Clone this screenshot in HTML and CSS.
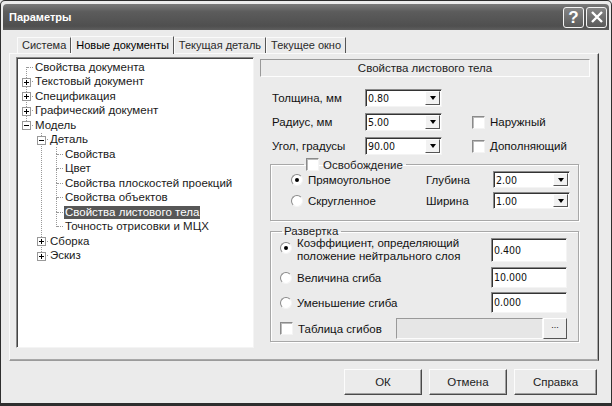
FILE: index.html
```html
<!DOCTYPE html>
<html lang="ru">
  <head>
    <meta charset="UTF-8" />
    <title>Параметры</title>
    <link rel="stylesheet" href="styles.css">
  </head>
  <body>
    <div class="window">
      <div class="titlebar">
        <span class="title">Параметры</span>
        <span class="capbtn">?</span>
        <span class="capbtn">
          <svg width="14" height="14" viewBox="0 0 14 14"><path d="M2 2 L12 12 M12 2 L2 12" stroke="#fff" stroke-width="2.4" /></svg>
        </span>
      </div>

      <div class="tabs">
        <span class="tab">Система</span>
        <span class="tab active">Новые документы</span>
        <span class="tab">Текущая деталь</span>
        <span class="tab">Текущее окно</span>
      </div>

      <div class="panel">
        <div class="treebox">
          <ul class="tree">
            <li><div class="row"><span class="twig"></span><span class="txt">Свойства документа</span></div></li>
            <li><div class="row"><span class="twig"><span class="tog plus"></span></span><span class="txt">Текстовый документ</span></div></li>
            <li><div class="row"><span class="twig"><span class="tog plus"></span></span><span class="txt">Спецификация</span></div></li>
            <li><div class="row"><span class="twig"><span class="tog plus"></span></span><span class="txt">Графический документ</span></div></li>
            <li>
              <div class="row"><span class="twig"><span class="tog"></span></span><span class="txt">Модель</span></div>
              <ul>
                <li>
                  <div class="row"><span class="twig"><span class="tog"></span></span><span class="txt">Деталь</span></div>
                  <ul>
                    <li><div class="row"><span class="twig"></span><span class="txt">Свойства</span></div></li>
                    <li><div class="row"><span class="twig"></span><span class="txt">Цвет</span></div></li>
                    <li><div class="row"><span class="twig"></span><span class="txt">Свойства плоскостей проекций</span></div></li>
                    <li><div class="row"><span class="twig"></span><span class="txt">Свойства объектов</span></div></li>
                    <li><div class="row"><span class="twig"></span><span class="txt selected">Свойства листового тела</span></div></li>
                    <li><div class="row"><span class="twig"></span><span class="txt">Точность отрисовки и МЦХ</span></div></li>
                  </ul>
                </li>
                <li><div class="row"><span class="twig"><span class="tog plus"></span></span><span class="txt">Сборка</span></div></li>
                <li><div class="row"><span class="twig"><span class="tog plus"></span></span><span class="txt">Эскиз</span></div></li>
              </ul>
            </li>
          </ul>
        </div>

        <div class="props">
          <div class="header">Свойства листового тела</div>

          <div class="params">
            <span>Толщина, мм</span>
            <span class="combo"><span class="val">0.80</span><span class="drop"></span></span>
            <span></span>

            <span>Радиус, мм</span>
            <span class="combo"><span class="val">5.00</span><span class="drop"></span></span>
            <span class="opt"><span class="check"></span>Наружный</span>

            <span>Угол, градусы</span>
            <span class="combo"><span class="val">90.00</span><span class="drop"></span></span>
            <span class="opt"><span class="check"></span>Дополняющий</span>
          </div>

          <fieldset class="group relief">
            <legend><span class="check"></span>Освобождение</legend>
            <span class="opt"><span class="radio on"></span>Прямоугольное</span>
            <span>Глубина</span>
            <span class="combo"><span class="val">2.00</span><span class="drop"></span></span>

            <span class="opt"><span class="radio"></span>Скругленное</span>
            <span>Ширина</span>
            <span class="combo"><span class="val">1.00</span><span class="drop"></span></span>
          </fieldset>

          <fieldset class="group unfold">
            <legend>Развертка</legend>
            <span class="opt two"><span class="radio on"></span>Коэффициент, определяющий<br>положение нейтрального слоя</span>
            <span class="field tall">0.400</span>

            <span class="opt"><span class="radio"></span>Величина сгиба</span>
            <span class="field">10.000</span>

            <span class="opt"><span class="radio"></span>Уменьшение сгиба</span>
            <span class="field">0.000</span>

            <div class="tablerow">
              <span class="opt"><span class="check"></span>Таблица сгибов</span>
              <span class="browse"><span class="path"></span><span class="dots">...</span></span>
            </div>
          </fieldset>
        </div>
      </div>

      <div class="buttons">
        <span class="btn">ОК</span>
        <span class="btn">Отмена</span>
        <span class="btn wide">Справка</span>
      </div>
    </div>
  </body>
</html>
```

FILE: styles.css
```css
* {
  box-sizing: border-box;
}
body {
  margin: 0;
  background: #ebebeb;
  font-family: "Liberation Sans", Arial, sans-serif;
  font-size: 11.5px;
  color: #111;
}

.window {
  width: 612px;
  height: 406px;
  background: #ebebeb;
  border: 1px solid #2e2e2e;
  border-bottom-width: 3px;
  padding: 3px 2px 0 2px;
  display: flex;
  flex-direction: column;
  border-radius: 5px 5px 0 0;
}

.titlebar {
  height: 26px;
  background: linear-gradient(#7a7a7a, #5c5c5c 30%, #4f4f4f 85%, #5e5e5e);
  border-radius: 4px 4px 0 0;
  display: flex;
  align-items: center;
  padding: 0 2px 0 6px;
  gap: 2px;
}
.title {
  flex: 1;
  color: #fff;
  font-weight: bold;
  font-size: 11px;
}
.capbtn {
  width: 21px;
  height: 21px;
  border: 1px solid #f4f4f4;
  border-radius: 3px;
  background: linear-gradient(#858585, #5a5a5a);
  color: #fff;
  font-weight: bold;
  font-size: 17px;
  display: grid;
  place-items: center;
  line-height: 1;
}

.tabs {
  display: flex;
  margin: 7px 0 0 14px;
  height: 16px;
  align-items: flex-end;
  font-size: 11px;
}
.tab {
  height: 16px;
  padding: 1px 4px 0 4px;
  border-right: 1px solid #555;
  border-top: 1px solid #fafafa;
  border-left: 1px solid #fafafa;
  white-space: nowrap;
  color: #2a2a2a;
}
.tab.active {
  height: 18px;
  margin-bottom: -1px;
  padding-top: 2px;
  background: #ebebeb;
  position: relative;
  z-index: 1;
  color: #000;
}

.panel {
  margin: 0 0 0 6px;
  width: 590px;
  height: 308px;
  border: 1px solid;
  border-color: #fafafa #3e3e3e #9a9a9a #fafafa;
  box-shadow: inset -1px -1px 0 #a8a8a8;
  display: flex;
  padding: 3px 0 0 6px;
  gap: 6px;
}

.treebox {
  width: 238px;
  height: 291px;
  background: #fff;
  border: 1px solid;
  border-color: #8a8a8a #f4f4f4 #f4f4f4 #8a8a8a;
  box-shadow: inset 1px 1px 0 #444;
  padding: 2px 0 0 2px;
}
.tree,
.tree ul {
  list-style: none;
  margin: 0;
  padding: 0;
}
.tree ul {
  padding-left: 15px;
}
.tree li {
  position: relative;
}
.tree li::after {
  content: "";
  position: absolute;
  left: 7px;
  top: 7px;
  bottom: -7px;
  border-left: 1px dotted #999;
}
.tree li:last-child::after {
  display: none;
}
.tree ul > li:first-child::before {
  content: "";
  position: absolute;
  left: 7px;
  top: 0;
  height: 7px;
  border-left: 1px dotted #999;
}
.row {
  display: flex;
  align-items: center;
  height: 14.5px;
  white-space: nowrap;
}
.twig {
  width: 15px;
  height: 14px;
  flex: none;
  display: flex;
  align-items: center;
  position: relative;
  z-index: 1;
}
.twig::before {
  content: "";
  width: 6px;
  margin-left: 8px;
  border-top: 1px dotted #999;
}
.tog {
  position: absolute;
  left: 3px;
  top: 3px;
  width: 9px;
  height: 9px;
  border: 1px solid #999;
  background: #fff linear-gradient(#000, #000) center / 5px 1px no-repeat;
}
.tog.plus {
  background:
    linear-gradient(#000, #000) center / 1px 5px no-repeat,
    #fff linear-gradient(#000, #000) center / 5px 1px no-repeat;
}
.txt {
  padding: 0 1px;
  line-height: 13px;
  color: #1a1a1a;
}
.txt.selected {
  background: #575757;
  color: #fff;
}

.props {
  width: 330px;
  display: flex;
  flex-direction: column;
}
.header {
  margin-top: 2px;
  height: 18px;
  border: 1px solid;
  border-color: #999 #fdfdfd #fdfdfd #999;
  text-align: center;
  line-height: 16px;
  color: #222;
}

.params {
  display: grid;
  grid-template-columns: 93px 107px auto;
  row-gap: 6px;
  align-items: center;
  margin: 12px 0 0 12px;
}

.combo {
  display: flex;
  width: 77px;
  height: 18px;
  background: #fff;
  border: 1px solid;
  border-color: #8a8a8a #f4f4f4 #f4f4f4 #8a8a8a;
  box-shadow: inset 1px 1px 0 #333;
}
.val {
  flex: 1;
  padding: 2px 0 0 2px;
  font-family: "DejaVu Sans Condensed", "Liberation Sans", sans-serif;
  font-size: 10.5px;
  line-height: 12px;
}
.drop {
  width: 15px;
  margin: 1px 1px 1px 0;
  background: #f2f2f2;
  border: 1px solid;
  border-color: #fff #555 #555 #fff;
  display: grid;
  place-items: center;
}
.drop::after {
  content: "";
  border-left: 3.5px solid transparent;
  border-right: 3.5px solid transparent;
  border-top: 4px solid #000;
}

.opt {
  display: flex;
  align-items: center;
  gap: 5px;
  white-space: nowrap;
}
.check {
  width: 13px;
  height: 13px;
  flex: none;
  background: #fff;
  border: 1px solid;
  border-color: #8a8a8a #f4f4f4 #f4f4f4 #8a8a8a;
  box-shadow: inset 1px 1px 0 #bbb;
}
.radio {
  width: 12px;
  height: 12px;
  flex: none;
  border-radius: 50%;
  background: #fff;
  border: 1px solid;
  border-color: #8a8a8a #f4f4f4 #f4f4f4 #8a8a8a;
  display: grid;
  place-items: center;
}
.radio.on::after {
  content: "";
  width: 4px;
  height: 4px;
  border-radius: 50%;
  background: #000;
}

.group {
  margin: 0;
  border: 1px solid #a8a8a8;
  box-shadow: 1px 1px 0 #fff, inset 1px 1px 0 #fff;
  min-width: 0;
}
.group legend {
  padding: 0 3px 0 2px;
  display: flex;
  align-items: center;
  gap: 4px;
  color: #222;
}

.relief {
  margin: 3px 0 0 10px;
  width: 309px;
  height: 63px;
  padding: 0 0 0 20px;
  display: grid;
  grid-template-columns: 135px 67px 77px;
  row-gap: 4px;
  align-items: center;
  align-content: start;
}
.relief legend {
  margin-left: 13px;
}
.relief .combo {
  height: 17px;
}

.unfold {
  margin: 4px 0 0 10px;
  width: 309px;
  height: 117px;
  padding: 0 0 0 9px;
  display: grid;
  grid-template-columns: 211px 76px;
  row-gap: 4px;
  align-items: center;
  align-content: start;
}
.unfold legend {
  margin-left: 2px;
}
.opt.two {
  line-height: 13px;
  align-items: flex-start;
}
.opt.two .radio {
  margin-top: 5px;
}
.field {
  height: 21px;
  background: #fff;
  border: 1px solid;
  border-color: #8a8a8a #f4f4f4 #f4f4f4 #8a8a8a;
  box-shadow: inset 1px 1px 0 #333;
  padding: 3px 0 0 2px;
  font-family: "DejaVu Sans Condensed", "Liberation Sans", sans-serif;
  font-size: 10.5px;
}
.field.tall {
  height: 24px;
  padding-top: 5px;
}
.tablerow {
  grid-column: 1 / 3;
  display: flex;
  align-items: center;
  justify-content: space-between;
  margin-top: 1px;
}
.browse {
  display: flex;
  height: 21px;
  width: 171px;
}
.path {
  flex: 1;
  border: 1px solid;
  border-color: #999 #fcfcfc #fcfcfc #999;
  background: #e6e6e6;
}
.dots {
  width: 24px;
  border: 1px solid;
  border-color: #fff #555 #555 #fff;
  background: #ececec;
  text-align: center;
  line-height: 12px;
  font-size: 9px;
}

.buttons {
  display: flex;
  justify-content: flex-end;
  gap: 7px;
  margin: 8px 12px 0 0;
}
.btn {
  width: 78px;
  height: 26px;
  border: 1px solid;
  border-color: #fcfcfc #4a4a4a #4a4a4a #fcfcfc;
  box-shadow: inset -1px -1px 0 #a0a0a0;
  display: grid;
  place-items: center;
  color: #222;
}
.btn.wide {
  width: 83px;
}
```
